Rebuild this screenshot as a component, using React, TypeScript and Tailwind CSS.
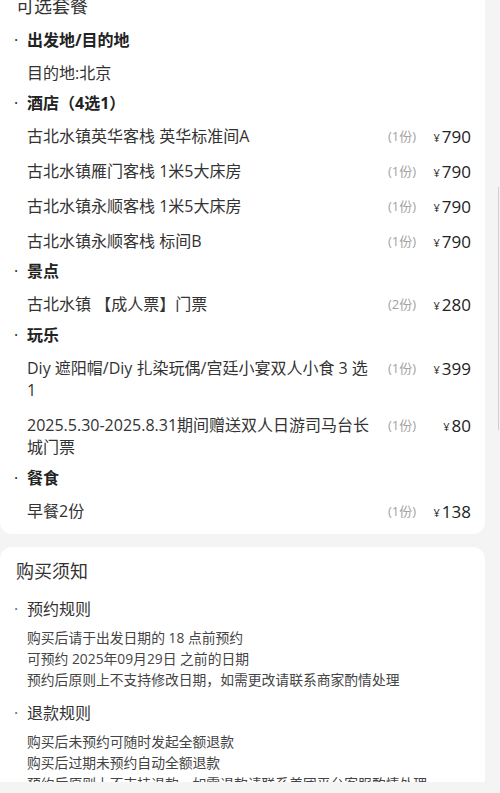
import React from "react";

const font = {
  fontFamily: '"Open Sans", "Noto Sans CJK SC", sans-serif',
};

type Item = { name: string; qty: string; price: string };
type Group = { title: string; items: Item[] };

const groups: Group[] = [
  { title: "出发地/目的地", items: [{ name: "目的地:北京", qty: "", price: "" }] },
  {
    title: "酒店（4选1）",
    items: [
      { name: "古北水镇英华客栈 英华标准间A", qty: "(1份)", price: "790" },
      { name: "古北水镇雁门客栈 1米5大床房", qty: "(1份)", price: "790" },
      { name: "古北水镇永顺客栈 1米5大床房", qty: "(1份)", price: "790" },
      { name: "古北水镇永顺客栈 标间B", qty: "(1份)", price: "790" },
    ],
  },
  {
    title: "景点",
    items: [{ name: "古北水镇 【成人票】门票", qty: "(2份)", price: "280" }],
  },
  {
    title: "玩乐",
    items: [
      { name: "Diy 遮阳帽/Diy 扎染玩偶/宫廷小宴双人小食 3 选 1", qty: "(1份)", price: "399" },
      { name: "2025.5.30-2025.8.31期间赠送双人日游司马台长城门票", qty: "(1份)", price: "80" },
    ],
  },
  { title: "餐食", items: [{ name: "早餐2份", qty: "(1份)", price: "138" }] },
];

const rules = [
  {
    title: "预约规则",
    lines: [
      "购买后请于出发日期的 18 点前预约",
      "可预约 2025年09月29日 之前的日期",
      "预约后原则上不支持修改日期，如需更改请联系商家酌情处理",
    ],
  },
  {
    title: "退款规则",
    lines: [
      "购买后未预约可随时发起全额退款",
      "购买后过期未预约自动全额退款",
      "预约后原则上不支持退款，如需退款请联系美团平台客服酌情处理",
    ],
  },
];

function PackageRow({ item }: { item: Item }) {
  return (
    <div className="flex items-start pl-[27px] pt-[8px] pb-[5px] text-[16px] leading-[22px] text-[#333]">
      <div className="flex-1 min-w-0">{item.name}</div>
      {item.price && (
        <>
          <div className="ml-[10px] shrink-0 text-[13px] text-[#a3a3a3]">{item.qty}</div>
          <div className="ml-[3px] flex h-[22px] w-[52px] shrink-0 items-center justify-end text-[#222]">
            <span className="mr-[2px] mt-[2px] text-[11px] leading-none">¥</span>
            <span className="text-[17px] font-medium leading-none">{item.price}</span>
          </div>
        </>
      )}
    </div>
  );
}

export default function App() {
  return (
    <div className="relative flex h-[793px] w-[500px] flex-col overflow-hidden bg-[#f4f4f4]" style={font}>
      <div className="flex-1 overflow-hidden">
        <div className="-mt-[18px] mr-[15px] flex flex-col gap-[13px]">
          {/* 可选套餐 */}
          <section className="rounded-[12px] bg-white pt-[12px] pb-[7px] pr-[14px]">
            <h2 className="pl-[16px] text-[18px] leading-[24px] text-[#333] mb-[8px]">可选套餐</h2>
            {groups.map((g, gi) => (
              <div key={g.title} className={gi > 2 ? "mt-[1px]" : ""}>
                <div className="flex items-center py-[3px] text-[16px] leading-[22px] font-bold text-[#222]">
                  <span className="w-[27px] pl-[14px] font-normal">·</span>
                  <span>{g.title}</span>
                </div>
                {g.items.map((it) => (
                  <PackageRow key={it.name} item={it} />
                ))}
              </div>
            ))}
          </section>

          {/* 购买须知 */}
          <section className="rounded-[12px] bg-white pt-[12px] pb-[20px] pr-[14px]">
            <h2 className="pl-[16px] text-[18px] leading-[24px] text-[#333]">购买须知</h2>
            {rules.map((r, ri) => (
              <div key={r.title} className={ri === 0 ? "mt-[14px]" : "mt-[11px]"}>
                <div className="flex items-center text-[16px] leading-[24px] text-[#333]">
                  <span className="w-[27px] pl-[14px] text-[#666]">·</span>
                  <span>{r.title}</span>
                </div>
                <div className="mt-[6px] pl-[27px] text-[13.8px] leading-[21px] text-[#444]">
                  {r.lines.map((l) => (
                    <div key={l}>{l}</div>
                  ))}
                </div>
              </div>
            ))}
          </section>
        </div>
      </div>
      <div className="h-[11px] shrink-0 bg-[#f4f4f4]" />
      {/* scroll indicator */}
      <div className="absolute right-[1px] top-[187px] h-[243px] w-[1.5px] bg-[#cfcfcf]" />
    </div>
  );
}
